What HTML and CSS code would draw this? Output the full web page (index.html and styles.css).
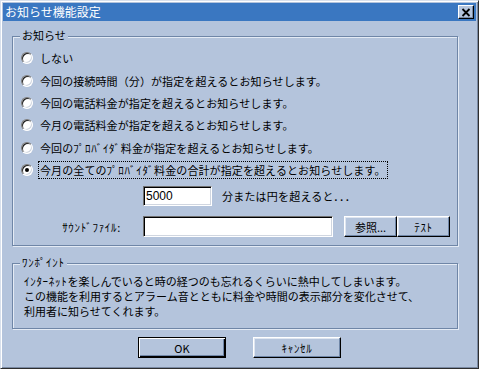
FILE: index.html
```html
<!DOCTYPE html>
<html lang="ja">
<head>
    <meta charset="UTF-8">
    <meta name="viewport" content="width=device-width, initial-scale=1.0">
    <title>お知らせ機能設定</title>
    <link rel="stylesheet" href="styles.css">
</head>
<body>
    <div class="window">
        <div class="titlebar">
            <span class="title">お知らせ機能設定</span>
            <button class="close">
                <svg width="10" height="9" viewBox="0 0 10 9">
                    <path d="M1.5 1 L8.5 8 M8.5 1 L1.5 8" stroke="#000" stroke-width="1.8" fill="none"/>
                </svg>
            </button>
        </div>
        <div class="client">
            <div class="group group-notify">
                <span class="group-title">お知らせ</span>
                <div class="options">
                    <div class="option"><span class="radio"></span><span class="option-text">しない</span></div>
                    <div class="option"><span class="radio"></span><span class="option-text">今回の接続時間（分）が指定を超えるとお知らせします。</span></div>
                    <div class="option"><span class="radio"></span><span class="option-text">今回の電話料金が指定を超えるとお知らせします。</span></div>
                    <div class="option"><span class="radio"></span><span class="option-text">今月の電話料金が指定を超えるとお知らせします。</span></div>
                    <div class="option"><span class="radio"></span><span class="option-text">今回の<span class="hw">ﾌﾟﾛﾊﾞｲﾀﾞ</span>料金が指定を超えるとお知らせします。</span></div>
                    <div class="option"><span class="radio checked"></span><span class="option-text focused">今月の全ての<span class="hw">ﾌﾟﾛﾊﾞｲﾀﾞ</span>料金の合計が指定を超えるとお知らせします。</span></div>
                </div>
                <div class="amount-row">
                    <input class="field field-amount" type="text" value="5000">
                    <span class="amount-text">分または円を超えると．．．</span>
                </div>
                <div class="sound-row">
                    <span class="sound-label"><span class="hw">ｻｳﾝﾄﾞﾌｧｲﾙ:</span></span>
                    <input class="field field-sound" type="text" value="">
                    <button class="btn btn-small">参照...</button>
                    <button class="btn btn-small"><span class="hw">ﾃｽﾄ</span></button>
                </div>
            </div>
            <div class="group group-tip">
                <span class="group-title"><span class="hw">ﾜﾝﾎﾟｲﾝﾄ</span></span>
                <p class="tip"><span class="hw">ｲﾝﾀｰﾈｯﾄ</span>を楽しんでいると時の経つのも忘れるくらいに熱中してしまいます。<br>この機能を利用するとアラーム音とともに料金や時間の表示部分を変化させて、<br>利用者に知らせてくれます。</p>
            </div>
            <div class="actions">
                <button class="btn btn-default">OK</button>
                <button class="btn btn-wide"><span class="hw">ｷｬﾝｾﾙ</span></button>
            </div>
        </div>
    </div>
</body>
</html>
```

FILE: styles.css
```css
body {
    margin: 0;
    font-family: "Noto Sans CJK JP", "DejaVu Sans", sans-serif;
    font-size: 11px;
    color: #000;
    background-color: #b4c4dc;
}

.window {
    width: 479px;
    height: 369px;
    box-sizing: border-box;
    padding: 2px;
    border: 1px solid;
    border-color: #d8e0ec #2e2e2e #2e2e2e #d8e0ec;
    box-shadow: inset 1px 1px 0 #ffffff, inset -1px -1px 0 #7a8aa4;
    background-color: #b4c4dc;
    overflow: hidden;
}

.titlebar {
    height: 18px;
    display: flex;
    align-items: center;
    justify-content: space-between;
    background-color: #3a77c1;
    color: #ffffff;
    padding-left: 2px;
}

.title {
    font-size: 12px;
    line-height: 14px;
}

.close {
    width: 16px;
    height: 14px;
    margin-right: 2px;
    padding: 0;
    display: flex;
    align-items: center;
    justify-content: center;
    background-color: #b4c4dc;
    border: 1px solid;
    border-color: #ffffff #000000 #000000 #ffffff;
    box-shadow: inset -1px -1px 0 #7a8aa4;
}

.client {
    display: flex;
    flex-direction: column;
}

/* half-width katakana are a bit wider in the original font */
.hw {
    letter-spacing: 0.7px;
}

.group {
    display: flex;
    flex-direction: column;
    box-sizing: border-box;
    width: 446px;
    margin-left: 9px;
    border: 1px solid #6f86a7;
    box-shadow: inset 1px 1px 0 #e4ebf5, 1px 1px 0 #e4ebf5;
}

.group-notify {
    margin-top: 15px;
    height: 210px;
}

.group-tip {
    margin-top: 17px;
    height: 66px;
}

.group-title {
    align-self: flex-start;
    margin: -8px 0 0 7px;
    padding: 0 2px;
    line-height: 13px;
    background-color: #b4c4dc;
}

.options {
    display: flex;
    flex-direction: column;
    margin-top: 5px;
    padding-left: 8px;
}

.option {
    height: 22.4px;
    display: flex;
    align-items: center;
}

.radio {
    position: relative;
    width: 12px;
    height: 12px;
    box-sizing: border-box;
    border-radius: 50%;
    border: 1px solid;
    border-color: #7c7c7c #ffffff #ffffff #7c7c7c;
    box-shadow: inset 1px 1px 0 #202020, inset -1px -1px 0 #d0d6e0;
    background-color: #ffffff;
    flex-shrink: 0;
}

.radio.checked::after {
    content: "";
    position: absolute;
    left: 3px;
    top: 3px;
    width: 4px;
    height: 4px;
    border-radius: 50%;
    background-color: #000000;
}

.option-text {
    margin-left: 5px;
    padding: 1px;
    line-height: 14px;
    border: 1px solid transparent;
    white-space: nowrap;
    letter-spacing: 0.1px;
}

.option-text.focused {
    border: 1px dotted #000000;
}

.amount-row {
    display: flex;
    align-items: center;
    margin-top: 5px;
    padding-left: 130px;
}

.field {
    box-sizing: border-box;
    margin: 0;
    padding: 1px 2px;
    font-family: "Liberation Sans", sans-serif;
    font-size: 12px;
    background-color: #ffffff;
    border: 1px solid;
    border-color: #6f6f6f #ffffff #ffffff #6f6f6f;
    box-shadow: inset 1px 1px 0 #000000, inset -1px -1px 0 #d0d6e0;
    outline: none;
}

.field-amount {
    width: 69px;
    height: 20px;
}

.amount-text {
    margin-left: 10px;
    letter-spacing: 0.2px;
}

.sound-row {
    display: flex;
    align-items: center;
    margin-top: 10px;
}

.sound-label {
    width: 108px;
    text-align: right;
    margin-right: 22px;
}

.field-sound {
    width: 190px;
    height: 21px;
}

.btn {
    box-sizing: border-box;
    margin: 0;
    padding: 0;
    font-family: "Noto Sans CJK JP", sans-serif;
    font-size: 11px;
    color: #000000;
    background-color: #b4c4dc;
    border: 1px solid;
    border-color: #ffffff #000000 #000000 #ffffff;
    box-shadow: inset -1px -1px 0 #6f86a7, inset 1px 1px 0 #dfe6f1;
}

.btn-small {
    width: 53px;
    height: 21px;
}

.sound-row .btn-small:first-of-type {
    margin-left: 11px;
}

.tip {
    margin: 5px 0 0 11px;
    line-height: 15px;
}

.actions {
    display: flex;
    justify-content: center;
    gap: 27px;
    margin-top: 8px;
}

.btn-wide {
    width: 88px;
    height: 21px;
}

.btn-default {
    width: 88px;
    height: 21px;
    border: 1px solid #000000;
    box-shadow: inset 1px 1px 0 #ffffff, inset -1px -1px 0 #000000, inset -2px -2px 0 #6f86a7;
}
```
